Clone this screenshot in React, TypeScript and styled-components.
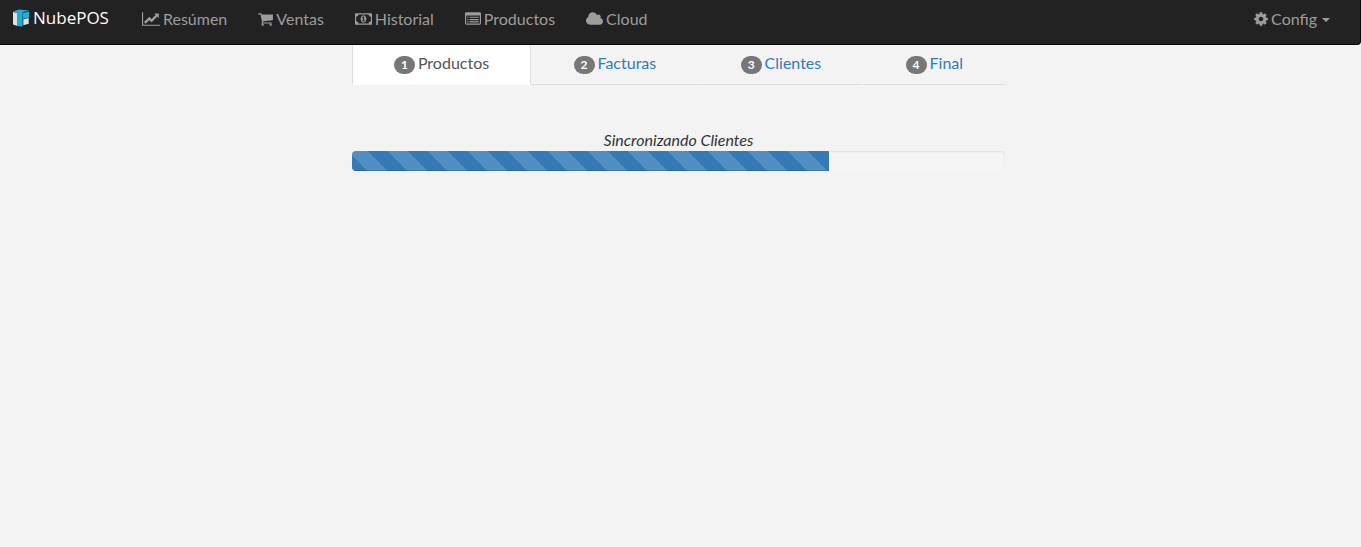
import React from "react";
import styled, { createGlobalStyle } from "styled-components";

const GlobalStyle = createGlobalStyle`
  *, *::before, *::after { box-sizing: border-box; }
  body {
    margin: 0;
    background: #f3f3f3;
    color: #333;
    font-family: Lato, "Liberation Sans", sans-serif;
    font-size: 16px;
    line-height: 20px;
  }
`;

const Navbar = styled.nav`
  display: flex;
  align-items: flex-start;
  min-height: 45px;
  background: #222;
  border: solid #080808;
  border-width: 0 1px 1px 0;
  border-radius: 0 0 4px 0;
`;

const Brand = styled.a`
  display: flex;
  align-items: center;
  gap: 3px;
  padding: 8px 18px 0 12px;
  color: #fff;
  font-family: "Open Sans", "Noto Sans", sans-serif;
  font-size: 17px;
  text-decoration: none;
`;

const NavList = styled.ul`
  display: flex;
  gap: 1px;
  margin: 0;
  padding: 0;
  list-style: none;
`;

const RightList = styled(NavList)`
  margin-left: auto;
  margin-right: 15px;
`;

const NavLink = styled.a`
  display: flex;
  align-items: center;
  gap: 3px;
  padding: 9px 15px 15px;
  color: #9d9d9d;
  text-decoration: none;
  white-space: nowrap;
`;

const Glyph = styled.svg`
  height: 16px;
  fill: currentColor;
`;

const Caret = styled.span`
  margin: 2px 0 0 2px;
  border: solid transparent;
  border-width: 4px 4px 0;
  border-top-color: currentColor;
`;

const Main = styled.main`
  width: calc(50% - 27px);
  margin: 0 auto;
  position: relative;
  left: -2px;
`;

const Tabs = styled.ul`
  display: flex;
  margin: 0 0 44px;
  padding: 0;
  list-style: none;
`;

const Tab = styled.li`
  flex: 1 1 auto;
`;

const TabLink = styled.a<{ $active?: boolean }>`
  display: flex;
  justify-content: center;
  gap: 3px;
  padding: 8px 15px 11px;
  border: 1px solid transparent;
  border-top: 0;
  border-color: ${(p) => (p.$active ? "#ddd #ddd #fff" : "transparent transparent #ddd")};
  background: ${(p) => (p.$active ? "#fff" : "transparent")};
  color: ${(p) => (p.$active ? "#555" : "#337ab7")};
  text-decoration: none;
  white-space: nowrap;
`;

const Badge = styled.span`
  margin-top: 3px;
  margin-bottom: -1px;
  padding: 3px 7px;
  border-radius: 10px;
  background: #777;
  color: #fff;
  font-size: 12px;
  font-weight: 700;
  line-height: 12px;
`;

const Status = styled.p`
  margin: 0;
  font-style: italic;
  line-height: 22px;
  text-align: center;
`;

const Progress = styled.div`
  height: 20px;
  overflow: hidden;
  border-radius: 4px;
  background: #f5f5f5;
  box-shadow: inset 0 1px 2px rgba(0, 0, 0, 0.1);
`;

const Bar = styled.div`
  height: 100%;
  background-color: #337ab7;
  background-image: linear-gradient(
    45deg,
    rgba(255, 255, 255, 0.15) 25%,
    transparent 25%,
    transparent 50%,
    rgba(255, 255, 255, 0.15) 50%,
    rgba(255, 255, 255, 0.15) 75%,
    transparent 75%
  );
  background-size: 40px 40px;
  background-position: -4px 0;
  box-shadow: inset 0 -1px 0 rgba(0, 0, 0, 0.15);
`;

type IconShape = { box: string; width: number; d: string };

const icons: Record<string, IconShape> = {
  chart: {
    box: "0 0 2048 1792",
    width: 18,
    d: "M2048 1536v128h-2048v-1536h128v1408h1920zm-128-1248v435q0 21-19.5 29.5t-35.5-7.5l-121-121-633 633q-10 10-23 10t-23-10l-233-233-416 416-192-192 585-585q10-10 23-10t23 10l233 233 464-464-121-121q-16-16-7.5-35.5t29.5-19.5h435q14 0 23 9t9 23z",
  },
  cart: {
    box: "64 0 1664 1792",
    width: 15,
    d: "M704 1536q0 52-38 90t-90 38-90-38-38-90 38-90 90-38 90 38 38 90zm896 0q0 52-38 90t-90 38-90-38-38-90 38-90 90-38 90 38 38 90zm128-1088v512q0 24-16.5 42.5t-40.5 21.5l-1044 122q13 60 13 70 0 16-24 64h920q26 0 45 19t19 45-19 45-45 19h-1024q-26 0-45-19t-19-45q0-11 8-31.5t16-36 21.5-40 15.5-29.5l-177-823h-204q-26 0-45-19t-19-45 19-45 45-19h256q16 0 28.5 6.5t19.5 15.5 13 24.5 8 26 5.5 29.5 4.5 26h1201q26 0 45 19t19 45z",
  },
  money: {
    box: "0 0 1920 1792",
    width: 17,
    d: "M768 1152h384v-96h-128v-448h-114l-148 137 77 80q42-37 55-57h2v288h-128v96zm512-256q0 70-21 142t-59.5 134-101.5 101-138 39-138-39-101.5-101-59.5-134-21-142 21-142 59.5-134 101.5-101 138-39 138 39 101.5 101 59.5 134 21 142zm512 256v-512q-106 0-181-75t-75-181h-1152q0 106-75 181t-181 75v512q106 0 181 75t75 181h1152q0-106 75-181t181-75zm128-832v1152q0 26-19 45t-45 19h-1792q-26 0-45-19t-19-45v-1152q0-26 19-45t45-19h1792q26 0 45 19t19 45z",
  },
  list: {
    box: "0 0 1792 1792",
    width: 16,
    d: "M256 640h128v128h-128zM256 896h128v128h-128zM256 1152h128v128h-128zM512 640h1024v128h-1024zM512 896h1024v128h-1024zM512 1152h1024v128h-1024zM1664 1376v-832q0-13-9.500-22.500t-22.500-9.500h-1472q-13 0-22.500 9.500t-9.500 22.500v832q0 13 9.500 22.500t22.500 9.500h1472q13 0 22.500-9.500t9.500-22.500zM1792 288v1088q0 66-47 113t-113 47h-1472q-66 0-113-47t-47-113v-1088q0-66 47-113t113-47h1472q66 0 113 47t47 113z",
  },
  cloud: {
    box: "64 0 1920 1792",
    width: 17,
    d: "M1984 1152q0 159-112.5 271.5t-271.5 112.5h-1088q-185 0-316.500-131.500t-131.500-316.500q0-132 71-241.500t187-163.500q-2-28-2-43 0-212 150-362t362-150q158 0 286.500 88t187.500 230q70-62 166-62 106 0 181 75t75 181q0 75-41 138 129 30 213 134.500t84 239.500z",
  },
  cog: {
    box: "128 0 1536 1792",
    width: 14,
    d: "M1152 896q0-106-75-181t-181-75-181 75-75 181 75 181 181 75 181-75 75-181zm512-109v222q0 12-8 23t-20 13l-185 28q-19 54-39 91 35 50 107 138 10 12 10 25t-9 23q-27 37-99 108t-94 71q-12 0-26-9l-138-108q-44 23-91 38-16 136-29 186-7 28-36 28h-222q-14 0-24.5-8.5t-11.5-21.5l-28-184q-49-16-90-37l-141 107q-10 9-25 9-14 0-25-11-126-114-165-168-7-10-7-23 0-12 8-23 15-21 51-66.5t54-70.5q-27-50-41-99l-183-27q-13-2-21-12.5t-8-23.5v-222q0-12 8-23t19-13l186-28q14-46 39-92-40-57-107-138-10-12-10-24 0-10 9-23 26-36 98.5-107.5t94.5-71.5q13 0 26 10l138 107q44-23 91-38 16-136 29-186 7-28 36-28h222q14 0 24.5 8.5t11.5 21.5l28 184q49 16 90 37l142-107q9-9 24-9 13 0 25 10 129 119 165 170 7 8 7 22 0 12-8 23-15 21-51 66.5t-54 70.5q26 50 41 98l183 28q13 2 21 12.5t8 23.5z",
  },
};

function Icon({ name }: { name: string }) {
  const { box, width, d } = icons[name];
  return (
    <Glyph viewBox={box} width={width} aria-hidden="true">
      <path fillRule="evenodd" d={d} />
    </Glyph>
  );
}

function Logo() {
  return (
    <svg width="18" height="18" viewBox="0 0 18 18" aria-hidden="true">
      <path fill="#e0e2e2" d="M1 3l4.500 1v13L1 15.500z" />
      <path fill="#1fb0d8" d="M1 2.600L7 .6l10 1-6 1.400v14l-1 .6-4.500-.6V4z" />
      <path fill="#1fb0d8" d="M11 3.800l6-1.400v6L11 9.700z" />
      <path fill="#1a5a70" d="M10.300 3.200L17 1.800v.7l-6 1.400v13.200l-.7.400z" />
      <path fill="#e0e2e2" d="M11.300 10.300l5.400-1.200v5.700l-5.400 1.400z" />
    </svg>
  );
}

const links = [
  ["chart", "Resúmen"],
  ["cart", "Ventas"],
  ["money", "Historial"],
  ["list", "Productos"],
  ["cloud", "Cloud"],
];

const steps = ["Productos", "Facturas", "Clientes", "Final"];
const progress = 73;

export default function App() {
  return (
    <>
      <GlobalStyle />
      <Navbar>
        <Brand href="#">
          <Logo />
          NubePOS
        </Brand>
        <NavList>
          {links.map(([icon, label]) => (
            <li key={label}>
              <NavLink href="#">
                <Icon name={icon} /> {label}
              </NavLink>
            </li>
          ))}
        </NavList>
        <RightList>
          <li>
            <NavLink href="#" aria-haspopup="true">
              <Icon name="cog" /> Config <Caret />
            </NavLink>
          </li>
        </RightList>
      </Navbar>
      <Main>
        <Tabs>
          {steps.map((step, i) => (
            <Tab key={step}>
              <TabLink href="#" $active={i === 0} aria-current={i === 0 ? "step" : undefined}>
                <Badge>{i + 1}</Badge> {step}
              </TabLink>
            </Tab>
          ))}
        </Tabs>
        <Status id="sync-status">Sincronizando Clientes</Status>
        <Progress
          role="progressbar"
          aria-labelledby="sync-status"
          aria-valuemin={0}
          aria-valuemax={100}
          aria-valuenow={progress}
        >
          <Bar style={{ width: `${progress}%` }} />
        </Progress>
      </Main>
    </>
  );
}
